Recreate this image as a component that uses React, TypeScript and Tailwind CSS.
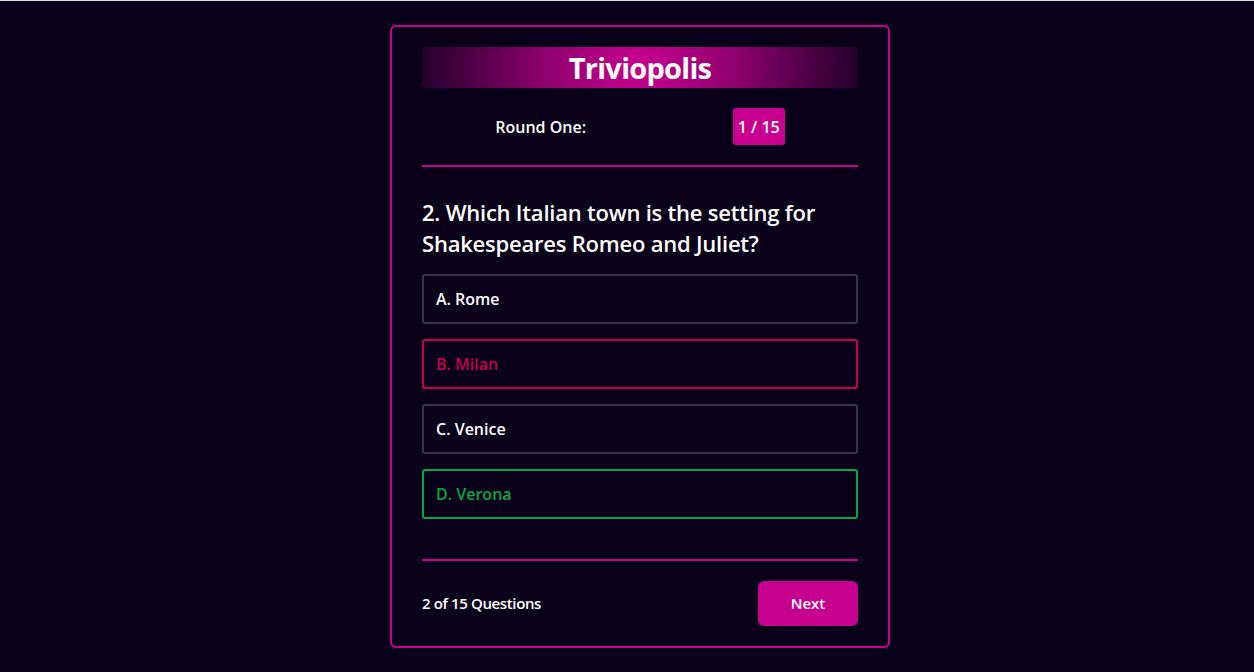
const OPTIONS = [
  { label: 'A. Rome', state: 'idle' },
  { label: 'B. Milan', state: 'wrong' },
  { label: 'C. Venice', state: 'idle' },
  { label: 'D. Verona', state: 'right' },
];

const optionStyles: Record<string, string> = {
  idle: 'border-[#3b3249] text-white',
  wrong: 'border-[#c4004a] text-[#c4004a]',
  right: 'border-[#00aa45] text-[#00aa45]',
};

export default function App() {
  return (
    <div
      className="min-h-[672px] bg-[#09001a] border-t border-[#e2e2e2] pt-6 pl-[26px]"
      style={{ fontFamily: '"Open Sans", "Noto Sans", sans-serif' }}
    >
      <div className="mx-auto w-[500px] border-2 border-[#c8008f] rounded-md px-[30px] pt-5 pb-5 text-white">
        {/* Title banner */}
        <div className="h-[41px] rounded flex items-center justify-center bg-[radial-gradient(circle,#c8008f_0%,#8c006c_45%,#22002c_100%)]">
          <h1 className="text-[29px] font-bold tracking-tight leading-none">Triviopolis</h1>
        </div>

        {/* Round info */}
        <div className="flex items-center justify-around mt-5">
          <span className="text-base font-semibold">Round One:</span>
          <span className="bg-[#c8008f] rounded-[3px] h-[37px] w-[52px] flex items-center justify-center text-base font-semibold">
            1 / 15
          </span>
        </div>

        <div className="h-[2px] bg-[#c8008f] mt-5" />

        {/* Question */}
        <h2 className="mt-[30px] text-[22px] font-semibold leading-[31px] tracking-[-0.01em]">
          2. Which Italian town is the setting for Shakespeares Romeo and Juliet?
        </h2>

        <div className="mt-[15px] flex flex-col gap-[15px]">
          {OPTIONS.map((o) => (
            <div
              key={o.label}
              className={`h-[50px] border-2 rounded-[3px] px-3 flex items-center text-base font-semibold ${optionStyles[o.state]}`}
            >
              {o.label}
            </div>
          ))}
        </div>

        <div className="h-[2px] bg-[#c8008f] mt-10" />

        {/* Footer */}
        <div className="mt-5 flex items-center justify-between">
          <span className="text-[15px] font-semibold tracking-tight">2 of 15 Questions</span>
          <button className="w-[100px] h-[45px] rounded-md bg-[#c8008f] text-[15px] font-semibold text-white">
            Next
          </button>
        </div>
      </div>
    </div>
  );
}
